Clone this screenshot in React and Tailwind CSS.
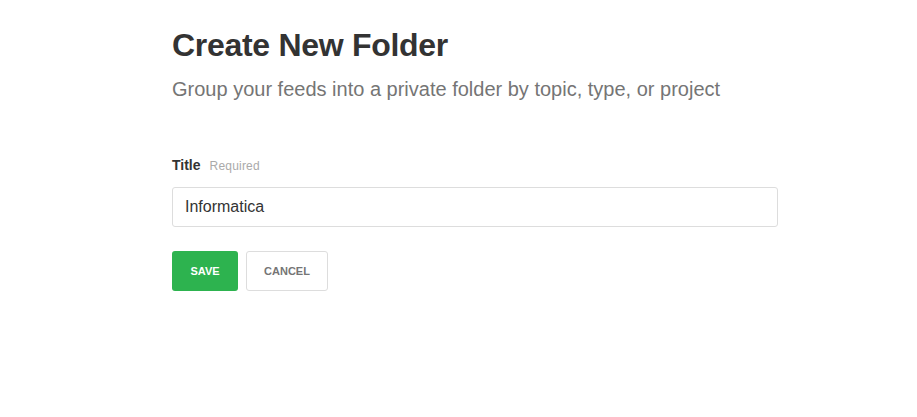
import React, { useState } from "react";

export default function App() {
  const [title, setTitle] = useState("Informatica");

  return (
    <div className="min-h-[417px] w-full bg-white font-['Liberation_Sans',Arial,sans-serif]">
      <div className="ml-[172px] w-[606px] pt-[25px]">
        <h1 className="text-[32px] leading-[40px] font-bold text-[#333333] tracking-[-0.3px]">Create New Folder</h1>
        <p className="mt-[12px] text-[20px] leading-[24px] text-[#757575]">
          Group your feeds into a private folder by topic, type, or project
        </p>

        <form className="mt-[54px]" onSubmit={(e) => e.preventDefault()}>
          <label className="flex items-baseline gap-[9px]">
            <span className="text-[14px] font-bold text-[#333333]">Title</span>
            <span className="text-[12px] tracking-[0.2px] text-[#aaaaaa]">Required</span>
          </label>
          <input
            type="text"
            value={title}
            onChange={(e) => setTitle(e.target.value)}
            className="mt-[11px] block h-[40px] w-full rounded-[3px] border border-[#dddddd] px-[12px] text-[16px] text-[#333333] outline-none"
          />
          <div className="mt-[24px] flex gap-[8px]">
            <button
              type="submit"
              className="h-[40px] w-[66px] rounded-[3px] bg-[#2db34f] pt-[1px] text-[11px] font-bold text-white"
            >
              SAVE
            </button>
            <button
              type="button"
              className="h-[40px] w-[82px] rounded-[3px] border border-[#dddddd] bg-white pt-[1px] text-[11px] font-bold text-[#757575]"
            >
              CANCEL
            </button>
          </div>
        </form>
      </div>
    </div>
  );
}
